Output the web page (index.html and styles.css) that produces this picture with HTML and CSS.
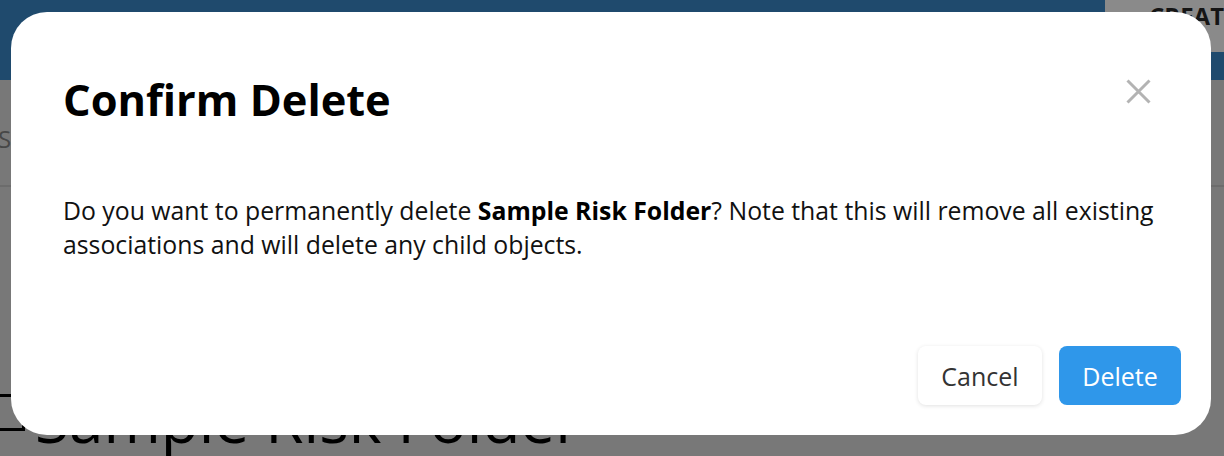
FILE: index.html
```html
<!DOCTYPE html>
<html lang="en">
<head>
<meta charset="utf-8">
<title>Confirm Delete</title>
<link rel="stylesheet" href="styles.css">
</head>
<body>
<div class="page">
  <header class="topbar">
    <div class="topbar-spacer"></div>
    <div class="create-btn">CREATE</div>
  </header>
  <div class="toolbar">
    <div class="search">Search</div>
  </div>
  <div class="content">
    <div class="folder-title">
      <span class="folder-box"></span>
      <span class="folder-name">Sample Risk Folder</span>
    </div>
  </div>
</div>

<div class="modal" role="dialog" aria-labelledby="modal-title">
  <div class="modal-header">
    <h1 id="modal-title" class="modal-title">Confirm Delete</h1>
    <button class="modal-close" aria-label="Close">
      <svg width="25" height="25" viewBox="0 0 25 25" aria-hidden="true">
        <path d="M1.5 1.5 L23.5 23.5 M23.5 1.5 L1.5 23.5" stroke="#b3b3b3" stroke-width="3" fill="none"/>
      </svg>
    </button>
  </div>
  <div class="modal-body">
    <p>Do you want to permanently delete <strong>Sample Risk Folder</strong>? Note that this will remove all existing associations and will delete any child objects.</p>
  </div>
  <div class="modal-footer">
    <button class="btn btn-cancel">Cancel</button>
    <button class="btn btn-delete">Delete</button>
  </div>
</div>
</body>
</html>
```

FILE: styles.css
```css
html, body {
  margin: 0;
  padding: 0;
}
body {
  width: 1224px;
  height: 456px;
  overflow: hidden;
  position: relative;
  font-family: "Open Sans", "Noto Sans", sans-serif;
  background: #787878;
}
.page {
  height: 456px;
  overflow: hidden;
  display: flex;
  flex-direction: column;
}
.topbar {
  height: 80px;
  background: #1f4a6d;
  display: flex;
  align-items: flex-start;
  flex-shrink: 0;
}
.topbar-spacer {
  flex: 1;
}
.create-btn {
  width: 119px;
  height: 52px;
  background: #8a8a8a;
  color: #151515;
  font-weight: 700;
  font-size: 24px;
  line-height: 28px;
  padding: 2px 0 0 44px;
  box-sizing: border-box;
  overflow: hidden;
  white-space: nowrap;
}
.toolbar {
  height: 105px;
  border-bottom: 2px solid #6c6c6c;
  display: flex;
  align-items: center;
  flex-shrink: 0;
}
.search {
  margin-left: -2px;
  color: #474747;
  font-size: 24px;
  padding-top: 12px;
}
.content {
  flex: 1;
  display: flex;
  align-items: flex-start;
  padding-top: 207px;
}
.folder-title {
  display: flex;
  align-items: flex-start;
  gap: 10px;
}
.folder-box {
  width: 22px;
  height: 31px;
  border: 3px solid #000;
  border-left: none;
}
.folder-name {
  font-size: 62px;
  color: #000;
  line-height: 62px;
  margin-top: -6px;
}

.modal {
  position: absolute;
  left: 11px;
  top: 12px;
  width: 1200px;
  height: 423px;
  box-sizing: border-box;
  background: #fff;
  border-radius: 36px;
  display: flex;
  flex-direction: column;
  padding: 0 30px 30px 52px;
}
.modal-header {
  display: flex;
  align-items: flex-start;
  justify-content: space-between;
  padding-top: 63px;
}
.modal-title {
  margin: 0;
  font-size: 43.4px;
  font-weight: 700;
  line-height: 50px;
  color: #000;
}
.modal-close {
  border: none;
  background: none;
  padding: 0;
  margin: 4px 30px 0 0;
  width: 25px;
  height: 25px;
  cursor: pointer;
  display: flex;
}
.modal-body {
  padding-top: 68px;
}
.modal-body p {
  margin: 0;
  font-size: 24.8px;
  line-height: 34px;
  color: #111;
}
.modal-body strong {
  font-weight: 700;
  color: #000;
}
.modal-footer {
  margin-top: auto;
  display: flex;
  justify-content: flex-end;
  gap: 17px;
}
.btn {
  height: 59px;
  border: none;
  border-radius: 8px;
  font-family: "Open Sans", "Noto Sans", sans-serif;
  font-size: 25px;
  padding: 0;
  cursor: pointer;
}
.btn-cancel {
  background: #fff;
  color: #333;
  box-shadow: 0 1px 4px rgba(0, 0, 0, 0.12);
  width: 124px;
}
.btn-delete {
  background: #2f97ea;
  color: #fff;
  width: 122px;
}
```
